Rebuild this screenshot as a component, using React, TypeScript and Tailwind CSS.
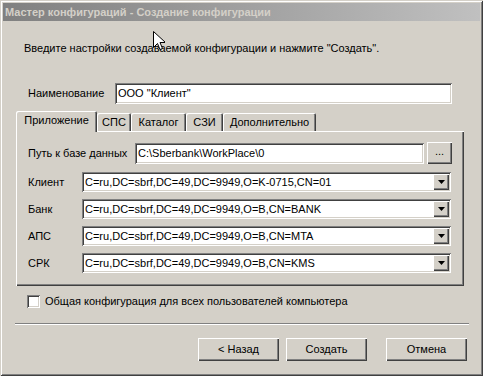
const raised =
    "shadow-[inset_1px_1px_#ffffff,inset_-1px_-1px_#404040,inset_-2px_-2px_#808080]";
const sunken =
    "shadow-[inset_1px_1px_#808080,inset_-1px_-1px_#ffffff,inset_2px_2px_#404040,inset_-2px_-2px_#d4d0c8]";

const tabs = [
    { label: "Приложение", w: "w-[81px]", active: true },
    { label: "СПС", w: "w-[34px]" },
    { label: "Каталог", w: "w-[55px]" },
    { label: "СЗИ", w: "w-[37px]" },
    { label: "Дополнительно", w: "w-[93px]" },
];

const certs = [
    { label: "Клиент", value: "C=ru,DC=sbrf,DC=49,DC=9949,O=K-0715,CN=01" },
    { label: "Банк", value: "C=ru,DC=sbrf,DC=49,DC=9949,O=B,CN=BANK" },
    { label: "АПС", value: "C=ru,DC=sbrf,DC=49,DC=9949,O=B,CN=MTA" },
    { label: "СРК", value: "C=ru,DC=sbrf,DC=49,DC=9949,O=B,CN=KMS" },
];

function Combo({ value }: { value: string }) {
    return (
        <div className={`flex h-[20px] w-[369px] items-center bg-white pl-[3px] pr-[2px] ${sunken}`}>
            <span className="flex-1 truncate">{value}</span>
            <span className={`flex h-[16px] w-[16px] items-center justify-center bg-[#d4d0c8] ${raised}`}>
                <svg width="7" height="4" viewBox="0 0 7 4">
                    <path d="M0 0h7L3.5 4z" fill="#000" />
                </svg>
            </span>
        </div>
    );
}

function Button({ children }: { children: React.ReactNode }) {
    return (
        <div className={`flex h-[23px] w-[81px] items-center justify-center bg-[#d4d0c8] ${raised}`}>
            {children}
        </div>
    );
}

export default function App() {
    return (
        <div
            className="relative flex h-[376px] w-[483px] flex-col bg-[#d4d0c8] p-[3px] text-[11px] leading-[13px] text-black shadow-[inset_1px_1px_#d4d0c8,inset_-1px_-1px_#404040,inset_2px_2px_#ffffff,inset_-2px_-2px_#808080]"
            style={{ fontFamily: '"Liberation Sans", Arial, sans-serif' }}
        >
            {/* Title bar */}
            <div className="flex h-[18px] items-center bg-gradient-to-r from-[#808080] to-[#c0c0c0] pl-[2px] font-bold text-[#d4d0c8]">
                Мастер конфигураций - Создание конфигурации
            </div>

            <p className="ml-[21px] mt-[21px]">
                Введите настройки создаваемой конфигурации и нажмите "Создать".
            </p>

            {/* Name */}
            <div className="ml-[25px] mt-[28px] flex items-center">
                <span className="w-[87px]">Наименование</span>
                <div className={`flex h-[21px] w-[337px] items-center bg-white pl-[3px] ${sunken}`}>
                    ООО "Клиент"
                </div>
            </div>

            {/* Tabs */}
            <div className="ml-[13px] mt-[7px]">
                <div className="flex h-[20px] items-end">
                    {tabs.map((t) =>
                        t.active ? (
                            <div
                                key={t.label}
                                className={`relative z-10 -mb-px flex h-[21px] ${t.w} items-center justify-center rounded-t-[2px] bg-[#d4d0c8] pb-[2px] shadow-[inset_1px_1px_#ffffff,inset_-1px_0_#404040,inset_-2px_0_#808080]`}
                            >
                                {t.label}
                            </div>
                        ) : (
                            <div
                                key={t.label}
                                className={`flex h-[18px] ${t.w} items-center justify-center rounded-t-[2px] bg-[#d4d0c8] shadow-[inset_1px_1px_#ffffff,inset_-1px_0_#404040,inset_-2px_0_#808080]`}
                            >
                                {t.label}
                            </div>
                        )
                    )}
                </div>
                <div className={`h-[155px] w-[448px] bg-[#d4d0c8] pl-[12px] pt-[11px] ${raised}`}>
                    <div className="flex items-center">
                        <span className="w-[107px]">Путь к базе данных</span>
                        <div className={`flex h-[21px] w-[289px] items-center bg-white pl-[3px] ${sunken}`}>
                            {"C:\\Sberbank\\WorkPlace\\0"}
                        </div>
                        <div className={`ml-[3px] flex h-[22px] w-[25px] items-center justify-center bg-[#d4d0c8] pb-[3px] ${raised}`}>
                            ...
                        </div>
                    </div>
                    <div className="mt-[8px] flex flex-col gap-[7px]">
                        {certs.map((c) => (
                            <div key={c.label} className="flex items-center">
                                <span className="w-[54px]">{c.label}</span>
                                <Combo value={c.value} />
                            </div>
                        ))}
                    </div>
                </div>
            </div>

            {/* Checkbox */}
            <div className="ml-[24px] mt-[9px] flex items-center gap-[5px]">
                <span className={`h-[13px] w-[13px] bg-white ${sunken}`} />
                <span>Общая конфигурация для всех пользователей компьютера</span>
            </div>

            <div className="ml-[12px] mt-[15px] h-[2px] w-[454px] border-t border-b border-t-[#808080] border-b-white" />

            {/* Buttons */}
            <div className="mr-[13px] mt-[13px] flex justify-end">
                <Button>&lt; Назад</Button>
                <div className="ml-[7px]">
                    <Button>Создать</Button>
                </div>
                <div className="ml-[19px]">
                    <Button>Отмена</Button>
                </div>
            </div>

            {/* Mouse cursor */}
            <svg className="absolute left-[153px] top-[31px]" width="12" height="20" viewBox="0 0 12 20">
                <path
                    d="M0.5 0.5v16l4-4 2.5 6 2.5-1-2.5-6h5.5z"
                    fill="#fff"
                    stroke="#000"
                    strokeWidth="1"
                />
            </svg>
        </div>
    );
}
